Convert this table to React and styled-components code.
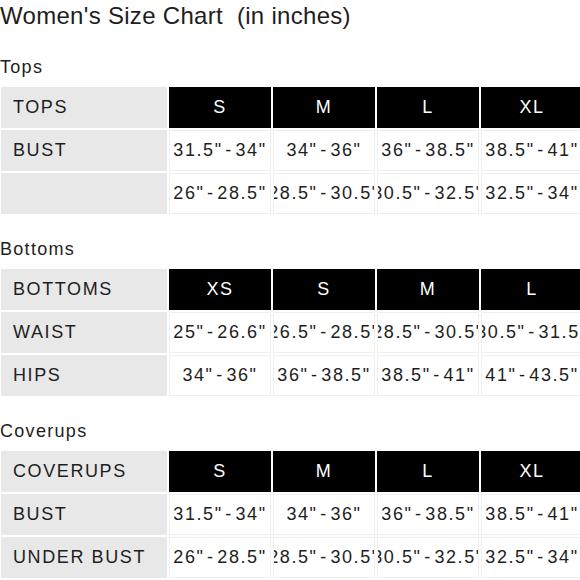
import React from 'react'
import styled, { createGlobalStyle } from 'styled-components'

const GlobalStyle = createGlobalStyle`
    body {
        margin: 0;
        background: #fff;
        font-family: "Liberation Sans", Arial, sans-serif;
        color: #222;
    }
`

const Page = styled.div`
    width: 580px;
    height: 580px;
    overflow: hidden;
    padding-top: 2px;
    box-sizing: border-box;
`

const Title = styled.div`
    font-size: 24px;
    line-height: 28px;
    letter-spacing: 0.3px;
    color: #1e1e1e;
    white-space: pre;
`

const SectionLabel = styled.div`
    font-size: 18px;
    line-height: 20px;
    letter-spacing: 1.3px;
    color: #1e1e1e;
    margin-top: ${props => props.first ? '27px' : '25px'};
    margin-bottom: 10px;
`

const Chart = styled.div`
    display: grid;
    grid-template-columns: 166px repeat(4, 102px);
    grid-auto-rows: 41px;
    gap: 2px;
    margin-left: 1px;
    width: 600px;
`

const Cell = styled.div`
    display: flex;
    align-items: center;
    overflow: hidden;
    white-space: nowrap;
    font-size: 18px;
    letter-spacing: 1.6px;
    word-spacing: -4px;
    box-sizing: border-box;
`

const LabelCell = styled(Cell)`
    background: #e8e8e8;
    padding-left: 12px;
    color: #1e1e1e;
    word-spacing: 0;
`

const HeadCell = styled(Cell)`
    background: #000;
    color: #fff;
    justify-content: center;
`

const ValueCell = styled(Cell)`
    background: #fff;
    border: 1px solid #efefef;
    justify-content: center;
    color: #1e1e1e;
`

const sections = [
    {
        name: 'Tops',
        head: 'TOPS',
        sizes: ['S', 'M', 'L', 'XL'],
        rows: [
            { label: 'BUST', values: ['31.5" - 34"', '34" - 36"', '36" - 38.5"', '38.5" - 41"'] },
            { label: '', values: ['26" - 28.5"', '28.5" - 30.5"', '30.5" - 32.5"', '32.5" - 34"'] },
        ],
    },
    {
        name: 'Bottoms',
        head: 'BOTTOMS',
        sizes: ['XS', 'S', 'M', 'L'],
        rows: [
            { label: 'WAIST', values: ['25" - 26.6"', '26.5" - 28.5"', '28.5" - 30.5"', '30.5" - 31.5"'] },
            { label: 'HIPS', values: ['34" - 36"', '36" - 38.5"', '38.5" - 41"', '41" - 43.5"'] },
        ],
    },
    {
        name: 'Coverups',
        head: 'COVERUPS',
        sizes: ['S', 'M', 'L', 'XL'],
        rows: [
            { label: 'BUST', values: ['31.5" - 34"', '34" - 36"', '36" - 38.5"', '38.5" - 41"'] },
            { label: 'UNDER BUST', values: ['26" - 28.5"', '28.5" - 30.5"', '30.5" - 32.5"', '32.5" - 34"'] },
        ],
    },
]

const App = () => {
    return (
        <Page>
            <GlobalStyle />
            <Title>Women's Size Chart  (in inches)</Title>
            {sections.map((section, index) => (
                <React.Fragment key={section.name}>
                    <SectionLabel first={index === 0}>{section.name}</SectionLabel>
                    <Chart>
                        <LabelCell>{section.head}</LabelCell>
                        {section.sizes.map(size => (
                            <HeadCell key={size}>{size}</HeadCell>
                        ))}
                        {section.rows.map((row, r) => (
                            <React.Fragment key={`row-` + r}>
                                <LabelCell>{row.label}</LabelCell>
                                {row.values.map((value, v) => (
                                    <ValueCell key={`value-` + v}>{value}</ValueCell>
                                ))}
                            </React.Fragment>
                        ))}
                    </Chart>
                </React.Fragment>
            ))}
        </Page>
    )
}

export default App
